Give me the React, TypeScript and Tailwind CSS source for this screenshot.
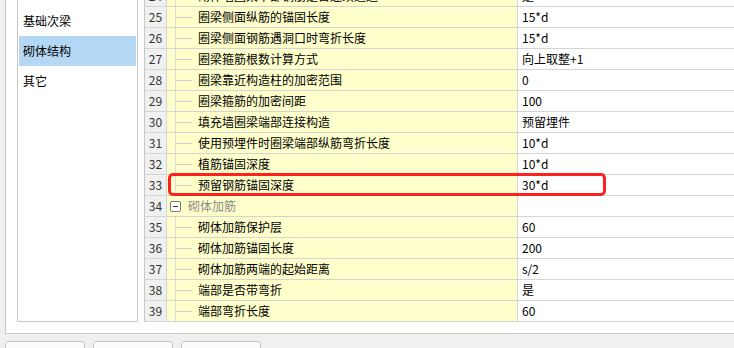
import React from "react";

type Row = { no: number; label: string; value?: string; group?: boolean };

const rows: Row[] = [
    { no: 24, label: "砌体墙圈梁下部钢筋是否连续通过", value: "是" },
    { no: 25, label: "圈梁侧面纵筋的锚固长度", value: "15*d" },
    { no: 26, label: "圈梁侧面钢筋遇洞口时弯折长度", value: "15*d" },
    { no: 27, label: "圈梁箍筋根数计算方式", value: "向上取整+1" },
    { no: 28, label: "圈梁靠近构造柱的加密范围", value: "0" },
    { no: 29, label: "圈梁箍筋的加密间距", value: "100" },
    { no: 30, label: "填充墙圈梁端部连接构造", value: "预留埋件" },
    { no: 31, label: "使用预埋件时圈梁端部纵筋弯折长度", value: "10*d" },
    { no: 32, label: "植筋锚固深度", value: "10*d" },
    { no: 33, label: "预留钢筋锚固深度", value: "30*d" },
    { no: 34, label: "砌体加筋", group: true },
    { no: 35, label: "砌体加筋保护层", value: "60" },
    { no: 36, label: "砌体加筋锚固长度", value: "200" },
    { no: 37, label: "砌体加筋两端的起始距离", value: "s/2" },
    { no: 38, label: "端部是否带弯折", value: "是" },
    { no: 39, label: "端部弯折长度", value: "60" },
];

const categories = ["基础次梁", "砌体结构", "其它"];

const GridRow = ({ row }: { row: Row }) => (
    <div className="flex h-[21px] border-b border-[#d4d4d4]">
        <div className="flex w-[22px] shrink-0 items-center justify-center border-r border-[#d4d4d4] bg-[#f0f0f0] text-[#333]">
            {row.no}
        </div>
        <div className="relative flex w-[351px] shrink-0 items-center border-r border-[#d4d4d4] bg-[#ffffcc]">
            {row.group ? (
                <>
                    <span className="ml-[3px] flex h-[11px] w-[11px] items-center justify-center rounded-[2px] border border-[#7a7a7a] bg-white">
                        <span className="h-px w-[5px] bg-[#333]" />
                    </span>
                    <span className="ml-[7px] text-[#8a8a8a]">{row.label}</span>
                </>
            ) : (
                <>
                    <span className="absolute left-[8px] top-0 h-[21px] w-px bg-[#dcdcdc]" />
                    <span className="absolute left-[9px] top-[10px] h-px w-[16px] bg-[#d0d0d0]" />
                    <span className="ml-[31px] text-black">{row.label}</span>
                </>
            )}
        </div>
        <div className="flex flex-1 items-center bg-white pl-[4px] text-black">
            {row.value}
        </div>
    </div>
);

export default function App() {
    return (
        <div
            className="h-[348px] w-[734px] overflow-hidden bg-[#f0f0f0] text-[12px] leading-none"
            style={{ fontFamily: "'Noto Sans CJK SC', 'Microsoft YaHei', sans-serif" }}
        >
            <div className="ml-[5px] flex h-[334px] w-[760px] overflow-hidden border-b border-l border-[#c8c8c8] bg-white pl-[11px]">
                <div className="h-[322px] w-[121px] shrink-0 border-x border-b border-[#c8c8c8] bg-white px-px pt-[6px]">
                    {categories.map((c) => (
                        <div
                            key={c}
                            className={`flex h-[30px] items-center pl-[4px] text-black ${c === "砌体结构" ? "bg-[#b4d8f4]" : ""}`}
                        >
                            {c}
                        </div>
                    ))}
                </div>

                <div className="relative ml-[6px] mt-[-14px] h-[336px] flex-1 border-l border-[#c8c8c8]">
                    {rows.map((r) => (
                        <GridRow key={r.no} row={r} />
                    ))}
                    {/* highlight around row 33 */}
                    <div className="pointer-events-none absolute left-[23px] top-[187px] h-[23px] w-[438px] rounded-[5px] border-[3px] border-[#ff1f1f]" />
                </div>
            </div>

            <div className="mt-[7px] flex gap-[8px] pl-[5px]">
                <div className="h-[20px] w-[80px] rounded-t-[3px] border border-[#c4c4c4] bg-[#fbfbfb]" />
                <div className="h-[20px] w-[80px] rounded-t-[3px] border border-[#c4c4c4] bg-[#fbfbfb]" />
                <div className="h-[20px] w-[80px] rounded-t-[3px] border border-[#c4c4c4] bg-[#fbfbfb]" />
            </div>
        </div>
    );
}
